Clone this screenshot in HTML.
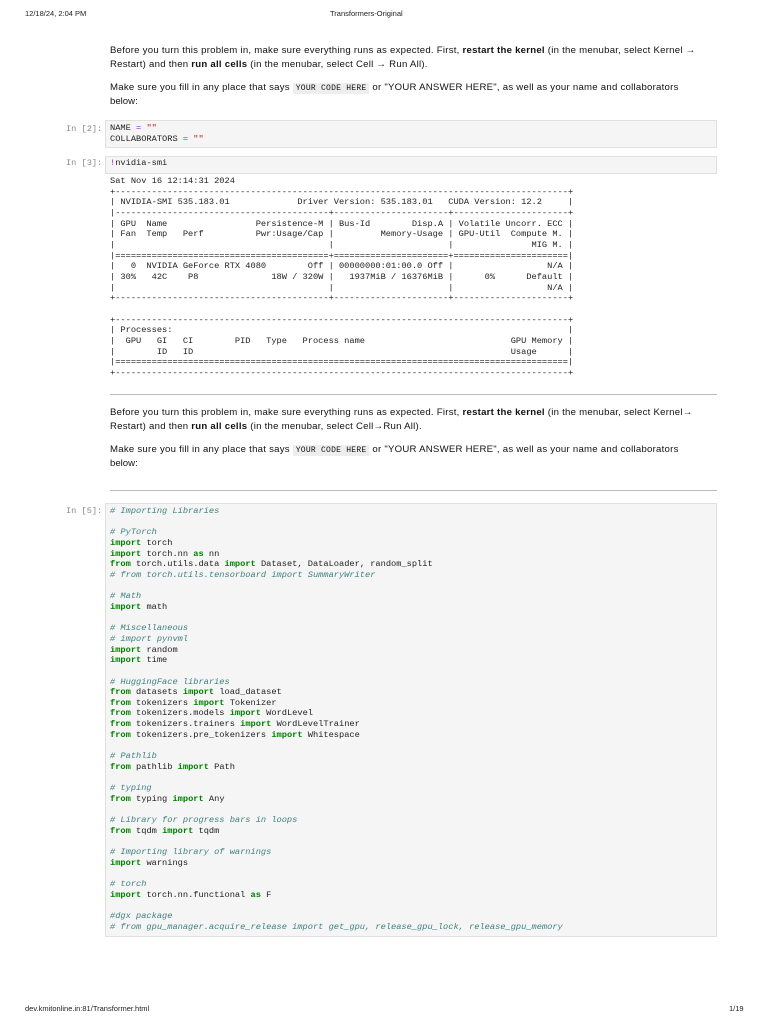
<!DOCTYPE html>
<html><head><meta charset="utf-8"><style>
*{margin:0;padding:0;box-sizing:border-box}
body{width:768px;height:1024px;background:#fff;position:relative;overflow:hidden;font-family:"Liberation Sans",sans-serif;color:#000}
.a{position:absolute}
.hdr{font-size:7.5px;color:#222;top:9px}
.p{font-size:9.6px;line-height:14px;white-space:nowrap;color:#111;left:110px}
.p b{font-weight:bold}
.kc{font-family:"Liberation Mono",monospace;font-size:8px;background:#eee;padding:1px 3px}
pre{font-family:"Liberation Mono",monospace;font-size:8.68px;line-height:10.65px;color:#222}
.cell{background:#f5f5f5;border:1px solid #e0e0e0}
.lab{font-family:"Liberation Mono",monospace;font-size:8.65px;color:#888;left:66px}
.k{color:#008000;font-weight:bold}
.c{color:#408080;font-style:italic}
.o{color:#aa22ff}
.s{color:#ba2121}
.hr{height:1px;background:#bbb;left:110px;width:607px}
</style></head><body>
<div class="a hdr" style="left:25px">12/18/24, 2:04 PM</div>
<div class="a hdr" style="left:330px">Transformers-Original</div>

<div class="a p" style="top:44px;letter-spacing:0.25px">Before you turn this problem in, make sure everything runs as expected. First, <b>restart the kernel</b> (in the menubar, select Kernel →</div>
<div class="a p" style="top:58px;letter-spacing:0.25px">Restart) and then <b>run all cells</b> (in the menubar, select Cell → Run All).</div>
<div class="a p" style="top:81px;letter-spacing:0.25px">Make sure you fill in any place that says <span class="kc">YOUR CODE HERE</span> or "YOUR ANSWER HERE", as well as your name and collaborators</div>
<div class="a p" style="top:95px">below:</div>

<div class="a lab" style="top:124px">In [2]:</div>
<div class="a cell" style="left:105px;top:120px;width:612px;height:28px"></div>
<pre class="a" style="left:110px;top:123px">NAME <span class="o">=</span> <span class="s">""</span>
COLLABORATORS <span class="o">=</span> <span class="s">""</span></pre>

<div class="a lab" style="top:158px">In [3]:</div>
<div class="a cell" style="left:105px;top:156px;width:612px;height:18px"></div>
<pre class="a" style="left:110px;top:158px"><span class="o">!</span>nvidia-smi</pre>

<pre class="a" style="left:110px;top:176px">Sat Nov 16 12:14:31 2024       
+---------------------------------------------------------------------------------------+
| NVIDIA-SMI 535.183.01             Driver Version: 535.183.01   CUDA Version: 12.2     |
|-----------------------------------------+----------------------+----------------------+
| GPU  Name                 Persistence-M | Bus-Id        Disp.A | Volatile Uncorr. ECC |
| Fan  Temp   Perf          Pwr:Usage/Cap |         Memory-Usage | GPU-Util  Compute M. |
|                                         |                      |               MIG M. |
|=========================================+======================+======================|
|   0  NVIDIA GeForce RTX 4080        Off | 00000000:01:00.0 Off |                  N/A |
| 30%   42C    P8              18W / 320W |   1937MiB / 16376MiB |      0%      Default |
|                                         |                      |                  N/A |
+-----------------------------------------+----------------------+----------------------+
                                                                                         
+---------------------------------------------------------------------------------------+
| Processes:                                                                            |
|  GPU   GI   CI        PID   Type   Process name                            GPU Memory |
|        ID   ID                                                             Usage      |
|=======================================================================================|
+---------------------------------------------------------------------------------------+</pre>

<div class="a hr" style="top:394px"></div>

<div class="a p" style="top:406px;letter-spacing:0.25px">Before you turn this problem in, make sure everything runs as expected. First, <b>restart the kernel</b> (in the menubar, select Kernel→</div>
<div class="a p" style="top:420px;letter-spacing:0.25px">Restart) and then <b>run all cells</b> (in the menubar, select Cell→Run All).</div>
<div class="a p" style="top:443px;letter-spacing:0.25px">Make sure you fill in any place that says <span class="kc">YOUR CODE HERE</span> or "YOUR ANSWER HERE", as well as your name and collaborators</div>
<div class="a p" style="top:457px">below:</div>

<div class="a hr" style="top:490px"></div>

<div class="a lab" style="top:506px">In [5]:</div>
<div class="a cell" style="left:105px;top:503px;width:612px;height:434px"></div>
<pre class="a" style="left:110px;top:506px"><span class="c"># Importing Libraries</span>

<span class="c"># PyTorch</span>
<span class="k">import</span> torch
<span class="k">import</span> torch.nn <span class="k">as</span> nn
<span class="k">from</span> torch.utils.data <span class="k">import</span> Dataset, DataLoader, random_split
<span class="c"># from torch.utils.tensorboard import SummaryWriter</span>

<span class="c"># Math</span>
<span class="k">import</span> math

<span class="c"># Miscellaneous</span>
<span class="c"># import pynvml</span>
<span class="k">import</span> random
<span class="k">import</span> time

<span class="c"># HuggingFace libraries</span>
<span class="k">from</span> datasets <span class="k">import</span> load_dataset
<span class="k">from</span> tokenizers <span class="k">import</span> Tokenizer
<span class="k">from</span> tokenizers.models <span class="k">import</span> WordLevel
<span class="k">from</span> tokenizers.trainers <span class="k">import</span> WordLevelTrainer
<span class="k">from</span> tokenizers.pre_tokenizers <span class="k">import</span> Whitespace

<span class="c"># Pathlib</span>
<span class="k">from</span> pathlib <span class="k">import</span> Path

<span class="c"># typing</span>
<span class="k">from</span> typing <span class="k">import</span> Any

<span class="c"># Library for progress bars in loops</span>
<span class="k">from</span> tqdm <span class="k">import</span> tqdm

<span class="c"># Importing library of warnings</span>
<span class="k">import</span> warnings

<span class="c"># torch</span>
<span class="k">import</span> torch.nn.functional <span class="k">as</span> F

<span class="c">#dgx package</span>
<span class="c"># from gpu_manager.acquire_release import get_gpu, release_gpu_lock, release_gpu_memory</span></pre>

<div class="a hdr" style="left:25px;top:1004px">dev.kmitonline.in:81/Transformer.html</div>
<div class="a hdr" style="left:729px;top:1004px">1/19</div>
</body></html>
